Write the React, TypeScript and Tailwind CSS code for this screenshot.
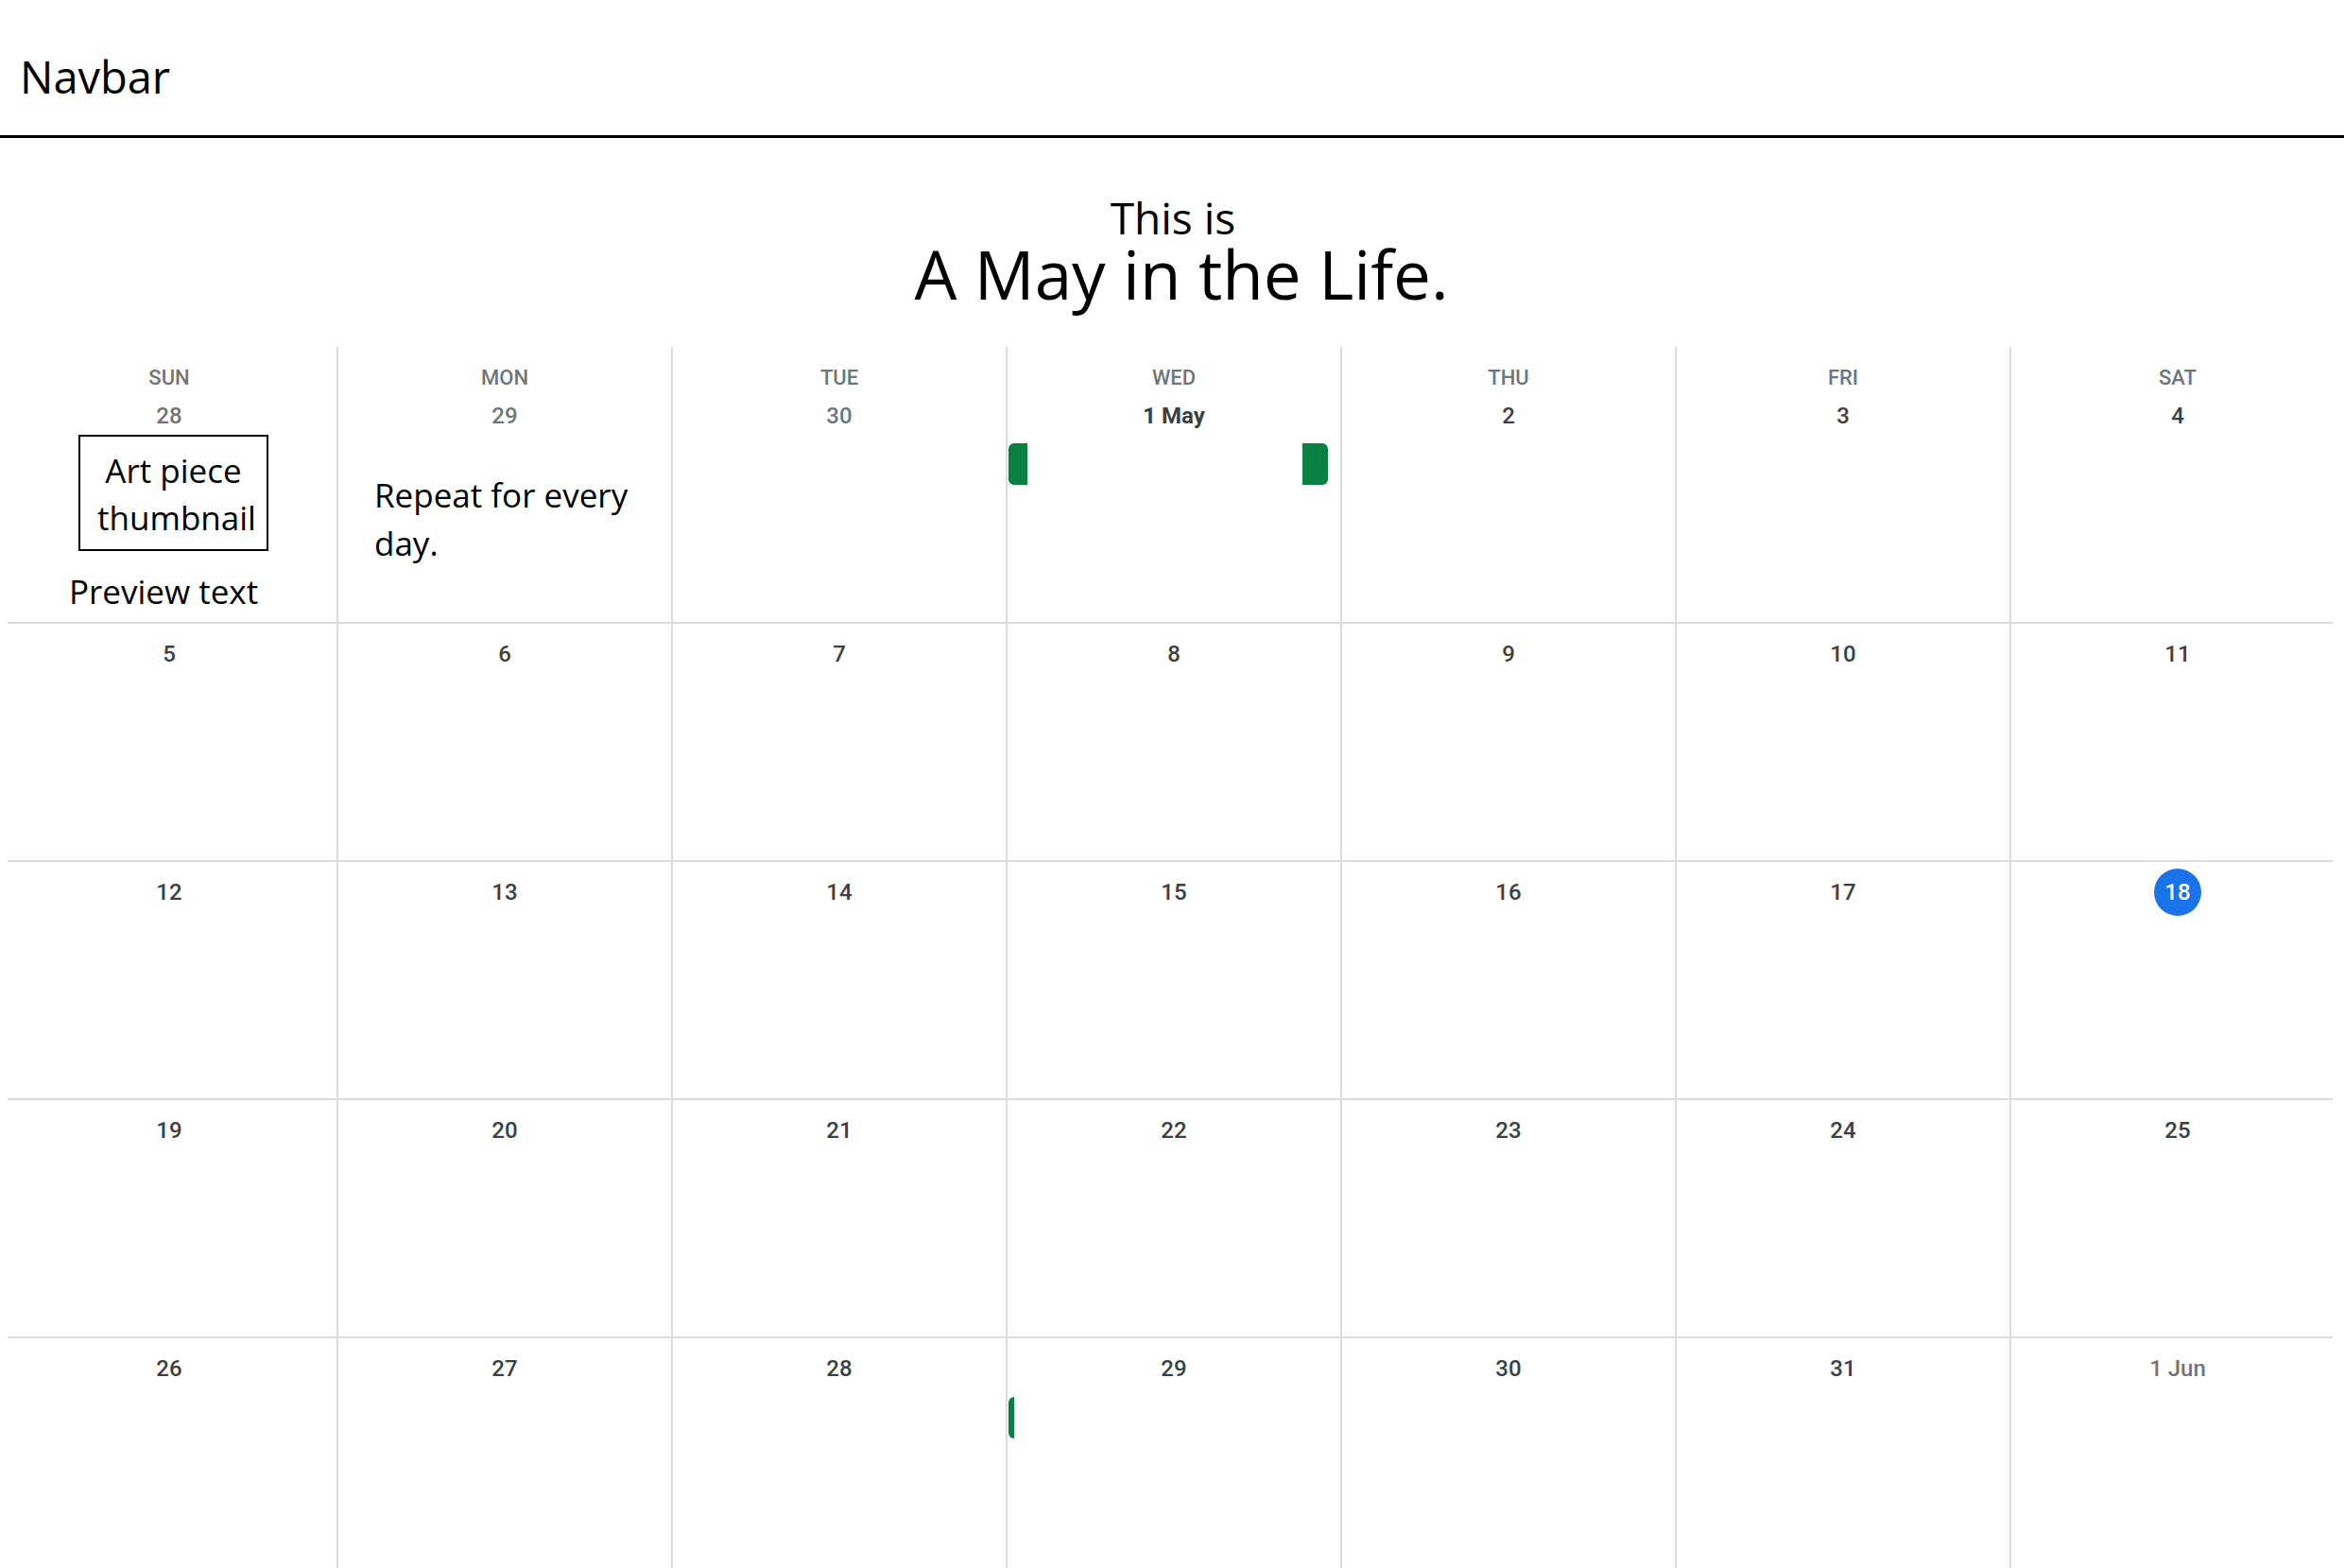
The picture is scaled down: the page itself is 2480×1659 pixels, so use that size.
import React from "react";

type Day = { label: string; muted?: boolean; bold?: boolean; today?: boolean };

const WEEKDAYS = ["SUN", "MON", "TUE", "WED", "THU", "FRI", "SAT"];

const d = (label: string, opts: Partial<Day> = {}): Day => ({ label, ...opts });

const WEEKS: Day[][] = [
  [d("28", { muted: true }), d("29", { muted: true }), d("30", { muted: true }), d("1 May", { bold: true }), d("2"), d("3"), d("4")],
  [d("5"), d("6"), d("7"), d("8"), d("9"), d("10"), d("11")],
  [d("12"), d("13"), d("14"), d("15"), d("16"), d("17"), d("18", { today: true })],
  [d("19"), d("20"), d("21"), d("22"), d("23"), d("24"), d("25")],
  [d("26"), d("27"), d("28"), d("29"), d("30"), d("31"), d("1 Jun", { muted: true })],
];

const ROW_HEIGHTS = ["h-[291px]", "h-[250px]", "h-[250px]", "h-[250px]", "h-[243px]"];

function DateLabel({ day }: { day: Day }) {
  if (day.today) {
    return (
      <div className="flex h-[48px] items-center justify-center">
        <span className="flex h-[50px] w-[50px] items-center justify-center rounded-full bg-[#1a73e8] text-[24px] font-medium text-white">
          {day.label}
        </span>
      </div>
    );
  }
  return (
    <div
      className={
        "h-[48px] text-center text-[24px] leading-[48px] " +
        (day.bold ? "font-bold " : "font-medium ") +
        (day.muted ? "text-[#70757a]" : "text-[#3c4043]")
      }
    >
      {day.label}
    </div>
  );
}

function Cell({ day, col, row }: { day: Day; col: number; row: number }) {
  const header = row === 0;
  return (
    <div
      className={
        "relative font-['Roboto',sans-serif] " +
        (col > 0 ? "border-l-2 border-[#dadce0] " : "") +
        (header ? "pt-[17px]" : "pt-[8px]")
      }
    >
      {header && (
        <div className="text-center text-[22px] font-medium leading-[32px] text-[#70757a]">{WEEKDAYS[col]}</div>
      )}
      <DateLabel day={day} />

      {header && col === 0 && (
        <div className="font-['Open_Sans',sans-serif] text-black">
          <div className="ml-[81px] mt-[-4px] flex h-[123px] w-[201px] flex-col items-center border-2 border-black pt-[11px] text-[35px] leading-[50px]">
            <span>Art piece</span>
            <span className="pl-[7px]">thumbnail</span>
          </div>
          <div className="ml-[71px] mt-[18px] text-[35px] leading-[50px]">Preview text</div>
        </div>
      )}

      {header && col === 1 && (
        <div className="ml-[38px] mt-[34px] w-[300px] font-['Open_Sans',sans-serif] text-[35px] leading-[51px] text-black">
          Repeat for every day.
        </div>
      )}

      {header && col === 3 && (
        <>
          <div className="absolute left-[1px] top-[102px] h-[44px] w-[20px] rounded-l-[6px] bg-[#0b8043]" />
          <div className="absolute left-[312px] top-[102px] h-[44px] w-[27px] rounded-r-[6px] bg-[#0b8043]" />
        </>
      )}

      {row === 4 && col === 3 && (
        <div className="absolute left-[1px] top-[62px] h-[44px] w-[6px] rounded-l-[6px] bg-[#0b8043]" />
      )}
    </div>
  );
}

export default function App() {
  return (
    <div className="h-[1659px] overflow-hidden bg-white text-black">
      <nav className="h-[146px] border-b-[3px] border-black pl-[21px] pt-[48px]">
        <span className="font-['Open_Sans',sans-serif] text-[47px] leading-[66px]">Navbar</span>
      </nav>

      <header className="pt-[60px] text-center font-['Open_Sans',sans-serif]">
        <div className="pl-[2px] text-[46px] leading-[48px]">This is</div>
        <h1 className="pl-[20px] text-[71px] leading-[72px]">A May in the Life.</h1>
      </header>

      <section className="mt-[41px]">
        {WEEKS.map((week, r) => (
          <React.Fragment key={r}>
            <div className={"ml-[2px] grid grid-cols-7 " + ROW_HEIGHTS[r]}>
              {week.map((day, c) => (
                <Cell key={c} day={day} col={c} row={r} />
              ))}
            </div>
            {r < WEEKS.length - 1 && <div className="ml-[8px] h-[2px] w-[2460px] bg-[#dadce0]" />}
          </React.Fragment>
        ))}
      </section>
    </div>
  );
}
